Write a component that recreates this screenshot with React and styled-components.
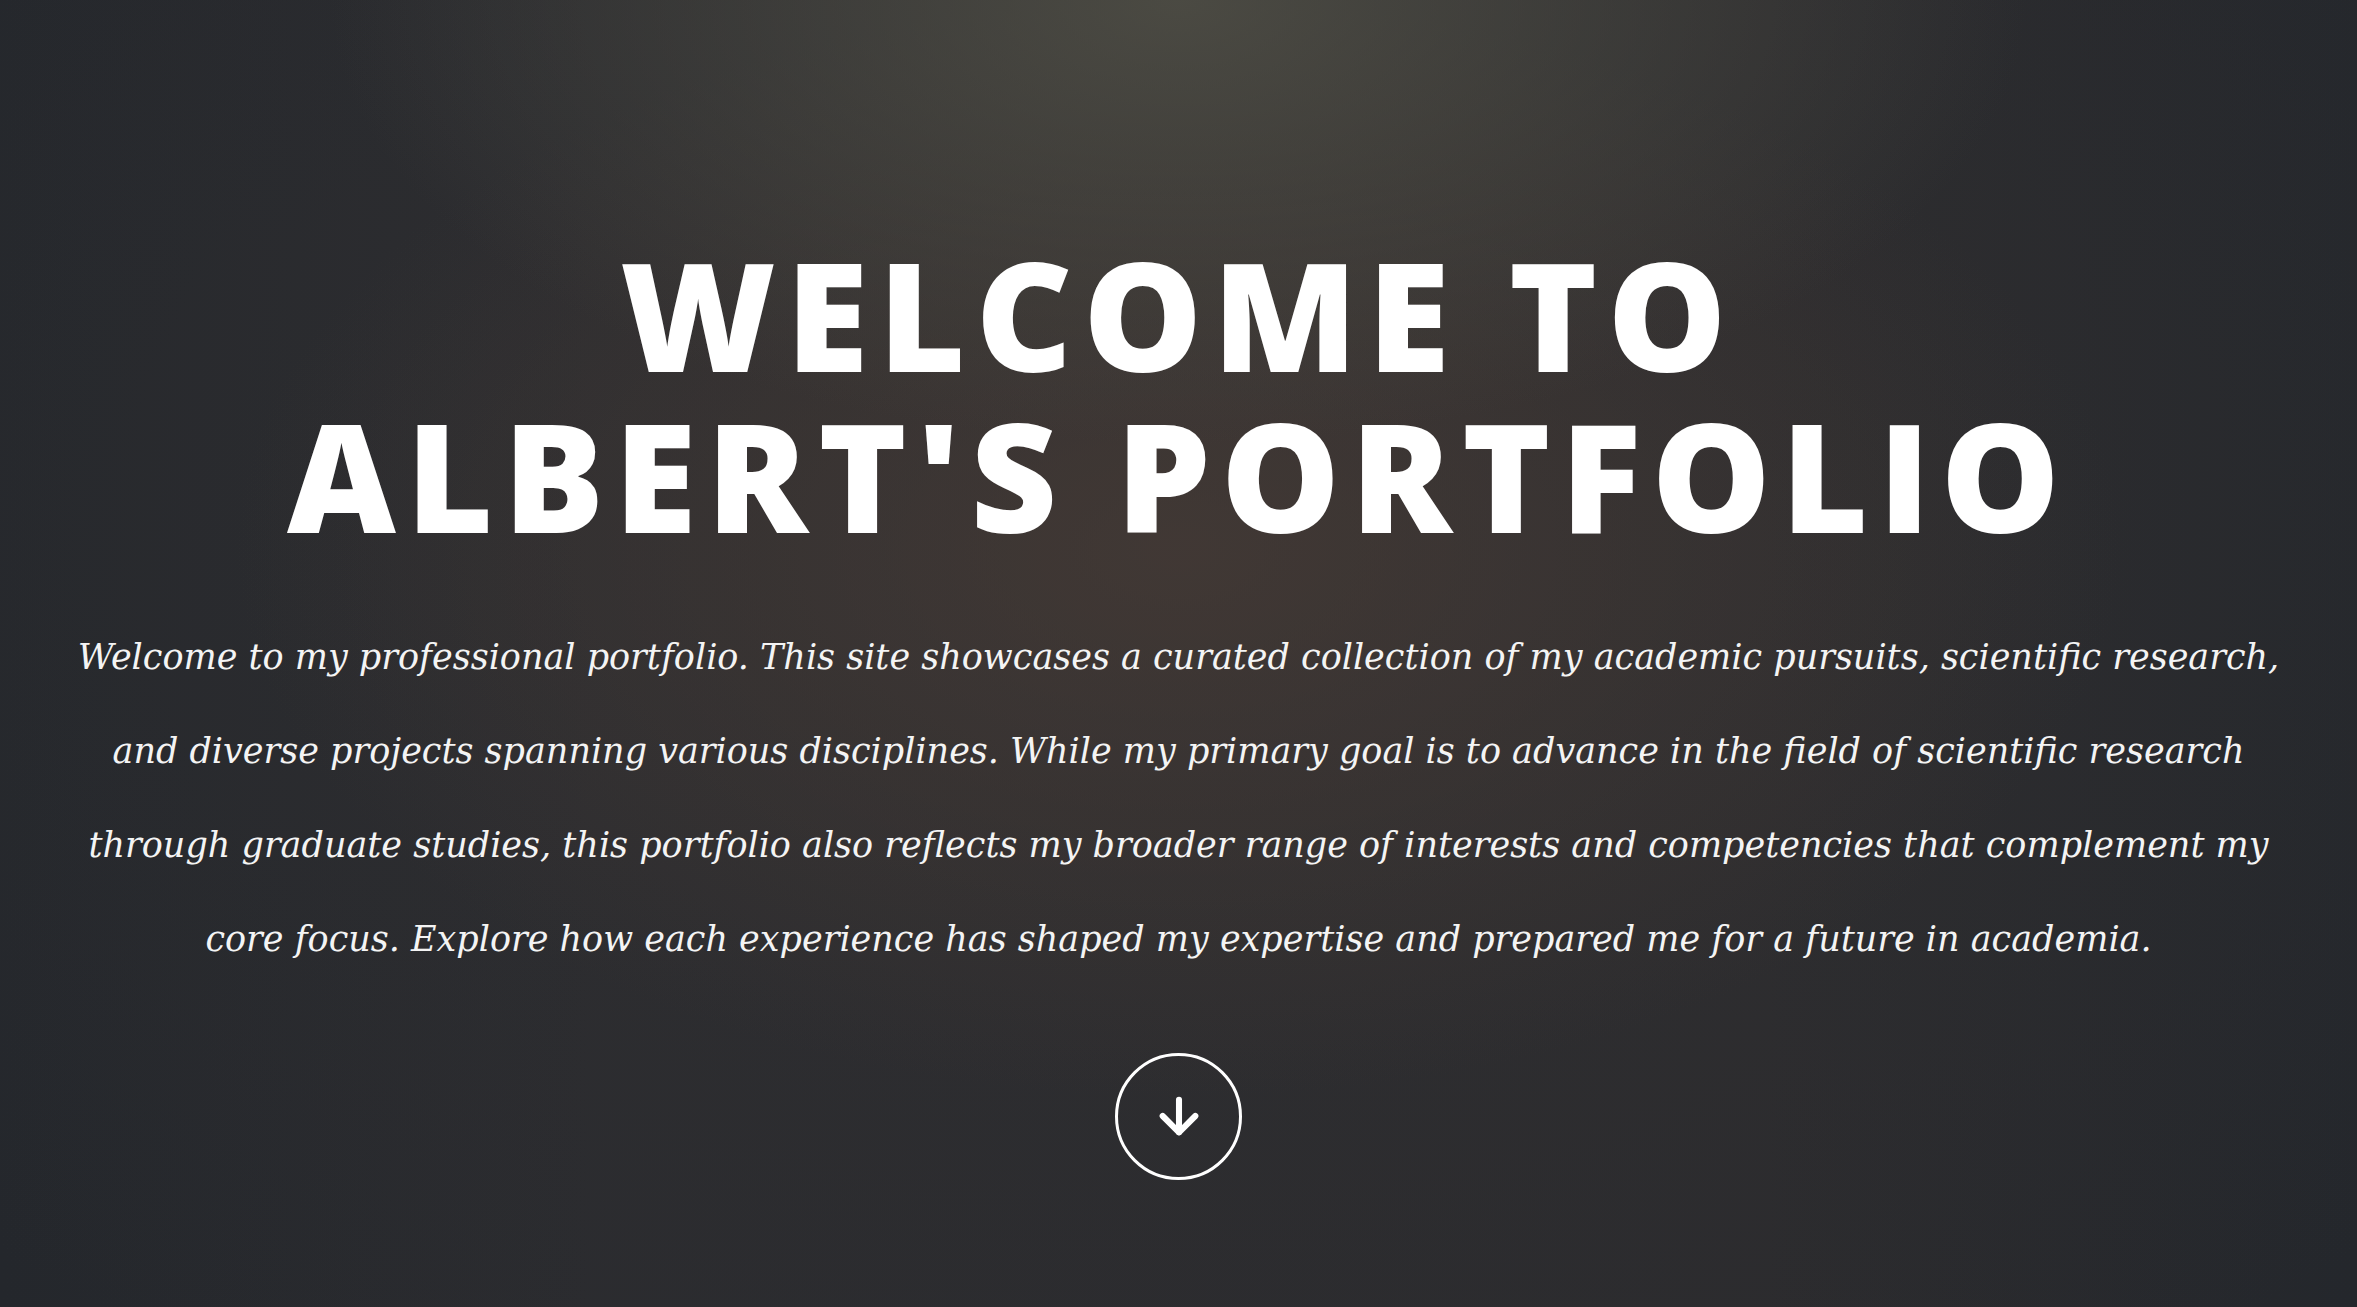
import React from 'react';
import styled, { createGlobalStyle } from 'styled-components';
import { ArrowDown } from 'lucide-react';

const GlobalStyle = createGlobalStyle`
  html, body {
    margin: 0;
    padding: 0;
    background: #2a2b2f;
  }
  * {
    box-sizing: border-box;
  }
`;

const Hero = styled.section`
  min-height: 100vh;
  display: flex;
  flex-direction: column;
  align-items: center;
  justify-content: center;
  padding: 106px 40px 0;
  color: #fff;
  background:
    radial-gradient(ellipse 36% 34% at 50% 0%, rgba(80, 79, 70, 0.85), rgba(80, 79, 70, 0) 100%),
    radial-gradient(ellipse 40% 42% at 50% 42%, rgba(72, 60, 54, 0.7), rgba(72, 60, 54, 0) 100%),
    radial-gradient(ellipse 70% 80% at 50% 40%, rgba(52, 50, 50, 0.55), rgba(36, 39, 44, 0) 100%),
    linear-gradient(90deg, #24272c 0%, #2a2b2f 25%, #2b2b2e 75%, #24272c 100%);
`;

const Title = styled.h1`
  margin: 0;
  font-family: 'Open Sans', 'Noto Sans', sans-serif;
  font-weight: 800;
  font-size: 150px;
  line-height: 161px;
  letter-spacing: 10px;
  text-align: center;
  text-transform: uppercase;
`;

const Intro = styled.p`
  max-width: 2250px;
  margin: 54px 0 0;
  font-family: 'DejaVu Serif', 'Liberation Serif', serif;
  font-style: italic;
  font-size: 35px;
  line-height: 94px;
  text-align: center;
  color: #f4f4f4;
`;

const ScrollButton = styled.a`
  margin-top: 67px;
  width: 127px;
  height: 127px;
  border: 3px solid #fff;
  border-radius: 50%;
  display: flex;
  align-items: center;
  justify-content: center;
  color: #fff;
  cursor: pointer;
`;

export default function App() {
  return (
    <>
      <GlobalStyle />
      <Hero>
        <Title>
          Welcome to
          <br />
          Albert's Portfolio
        </Title>
        <Intro>
          Welcome to my professional portfolio. This site showcases a curated collection of my academic pursuits, scientific research, and diverse projects spanning various disciplines. While my primary goal is to advance in the field of scientific research through graduate studies, this portfolio also reflects my broader range of interests and competencies that complement my core focus. Explore how each experience has shaped my expertise and prepared me for a future in academia.
        </Intro>
        <ScrollButton href="#about" aria-label="Scroll down">
          <ArrowDown size={56} strokeWidth={2.6} />
        </ScrollButton>
      </Hero>
    </>
  );
}
